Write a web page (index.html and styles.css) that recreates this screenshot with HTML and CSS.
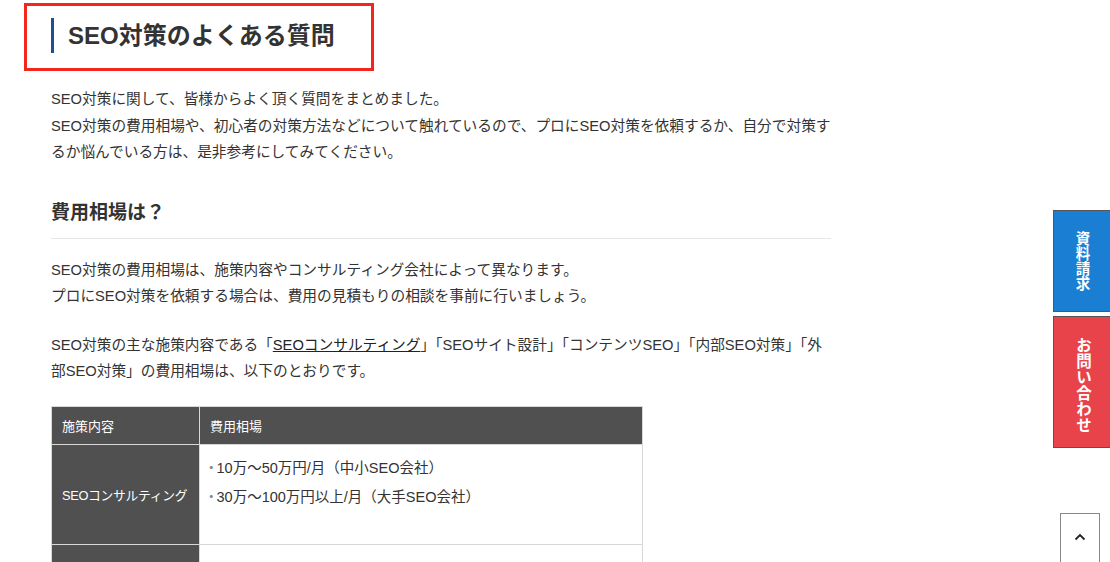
FILE: index.html
```html
<!DOCTYPE html>
<html lang="ja">
<head>
    <meta charset="UTF-8">
    <meta name="viewport" content="width=device-width, initial-scale=1.0">
    <title>SEO対策のよくある質問</title>
    <link rel="stylesheet" href="styles.css">
</head>
<body>

    <div class="article">
        <div class="highlight">
            <h2 class="section-title">SEO対策のよくある質問</h2>
        </div>

        <p class="lead">SEO対策に関して、皆様からよく頂く質問をまとめました。<br>SEO対策の費用相場や、初心者の対策方法などについて触れているので、プロにSEO対策を依頼するか、自分で対策するか悩んでいる方は、是非参考にしてみてください。</p>

        <h3 class="faq-title">費用相場は？</h3>

        <p class="text">SEO対策の費用相場は、施策内容やコンサルティング会社によって異なります。<br>プロにSEO対策を依頼する場合は、費用の見積もりの相談を事前に行いましょう。</p>

        <p class="text">SEO対策の主な施策内容である「<a href="#" class="link">SEOコンサルティング</a>」「SEOサイト設計」「コンテンツSEO」「内部SEO対策」「外部SEO対策」の費用相場は、以下のとおりです。</p>

        <table class="price-table">
            <tr>
                <th class="col-name">施策内容</th>
                <th>費用相場</th>
            </tr>
            <tr>
                <th class="row-name">SEOコンサルティング</th>
                <td>
                    <ul class="price-list">
                        <li>10万〜50万円/月（中小SEO会社）</li>
                        <li>30万〜100万円以上/月（大手SEO会社）</li>
                    </ul>
                </td>
            </tr>
            <tr class="row-next">
                <th class="row-name">SEOサイト設計</th>
                <td>
                    <ul class="price-list">
                        <li>30万〜100万円</li>
                    </ul>
                </td>
            </tr>
        </table>
    </div>

    <div class="side-buttons">
        <a href="#" class="side-btn doc-btn"><span>資料請求</span></a>
        <a href="#" class="side-btn contact-btn"><span>お問い合わせ</span></a>
    </div>

    <a href="#" class="to-top">
        <svg width="12" height="8" viewBox="0 0 12 8"><path d="M1.5 6.5 L6 2 L10.5 6.5" fill="none" stroke="#222" stroke-width="1.8"/></svg>
    </a>

</body>
</html>
```

FILE: styles.css
```css
body {
    margin: 0;
    font-family: "Liberation Sans", "Noto Sans CJK JP", sans-serif;
    color: #333;
    background: #fff;
    overflow: hidden;
}
.article {
    width: 780px;
    padding: 3px 0 0 51px;
}
.highlight {
    width: 320px;
    margin-left: -27px;
    padding: 12px 0 15px 24px;
    border: 3px solid #f3261c;
}
.section-title {
    margin: 0;
    border-left: 3px solid #1e4f8f;
    padding-left: 14px;
    font-size: 24px;
    line-height: 35px;
    font-weight: bold;
    color: #333;
}
.lead, .text {
    margin: 15px 0 0;
    font-size: 14.7px;
    line-height: 26.5px;
}
.faq-title {
    margin: 32px 0 0;
    padding-bottom: 10px;
    border-bottom: 1px solid #e6e6e6;
    font-size: 19px;
    line-height: 30px;
    font-weight: bold;
}
.faq-title + .text {
    margin-top: 18px;
}
.text + .text {
    margin-top: 22px;
}
.link {
    color: #222;
    text-decoration: underline;
}
.price-table {
    margin-top: 21px;
    width: 592px;
    border-collapse: collapse;
    font-size: 13px;
}
.price-table th {
    background: #505050;
    color: #fff;
    font-weight: normal;
    text-align: left;
    padding: 0 4px 0 10px;
    border: 1px solid #d8d8d8;
    white-space: nowrap;
}
.price-table tr:first-child th {
    height: 37px;
}
.price-table .col-name {
    width: 133px;
}
.price-table .row-name {
    font-size: 12.8px;
    letter-spacing: -0.3px;
}
.price-table td {
    border: 1px solid #d8d8d8;
    padding: 9px 8px 0;
    height: 90px;
    vertical-align: top;
}
.price-table .row-next td {
    padding-top: 22px;
}
.price-list {
    list-style: none;
    margin: 0;
    padding: 0;
}
.price-list li {
    font-size: 14.5px;
    line-height: 29px;
}
.price-list li::before {
    content: "・";
    color: #888;
    margin-left: -4px;
    margin-right: -2px;
}
.side-buttons {
    position: fixed;
    top: 210px;
    right: 0;
    display: flex;
    flex-direction: column;
    gap: 4px;
}
.side-btn {
    display: flex;
    justify-content: center;
    width: 57px;
    padding-top: 20px;
    border: 1px solid #555;
    border-right: none;
    color: #fff;
    font-size: 14.5px;
    font-weight: bold;
    text-decoration: none;
    box-sizing: border-box;
}
.side-btn span {
    writing-mode: vertical-rl;
    letter-spacing: 0.5px;
}
.doc-btn {
    background: #1a7ed3;
    height: 102px;
}
.contact-btn {
    background: #e8434b;
    height: 132px;
    font-size: 15.5px;
}
.to-top {
    position: fixed;
    left: 1060px;
    top: 513px;
    width: 40px;
    height: 52px;
    border: 1px solid #888;
    background: #fff;
    box-sizing: border-box;
    display: flex;
    align-items: center;
    justify-content: center;
    padding-bottom: 4px;
}
```
